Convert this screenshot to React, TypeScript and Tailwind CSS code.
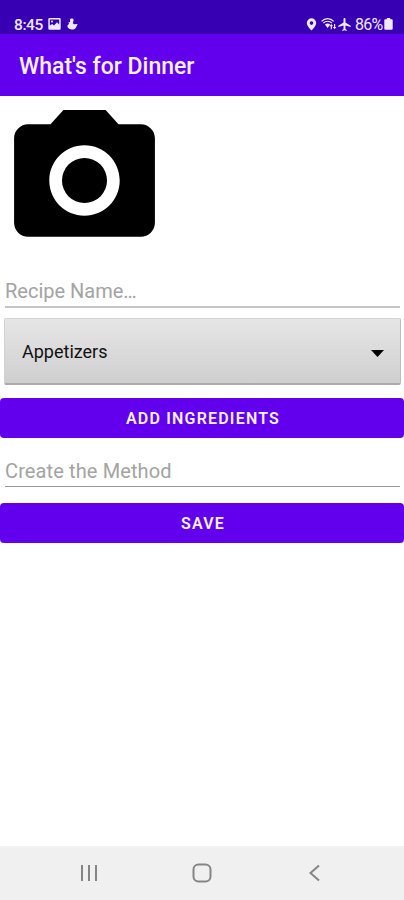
import { useState } from 'react';

const CATEGORIES = ['Appetizers'];

const StatusBar = () => (
	<div className="h-[34px] bg-[#3700b3] text-[#eee9fb] flex items-end justify-between pl-[14px] pr-[11px] pb-[2px]">
		<div className="flex items-center h-[16px]">
			<span className="mt-[2px] w-[29px] text-[15.5px] font-medium leading-[16px] tracking-[-0.4px] whitespace-nowrap">
				8:45
			</span>
			<svg className="ml-[5px]" width="13" height="12" viewBox="0 0 13 12">
				<path
					fill="currentColor"
					fillRule="evenodd"
					d="M1.5 0h10A1.2 1.2 0 0 1 12.700 1.200v9.300a1.200 1.200 0 0 1-1.200 1.200h-10A1.200 1.200 0 0 1 .3 10.500V1.200A1.200 1.200 0 0 1 1.500 0zM1.800 1.500v6L4.200 6l1.900 1.500L9 4.200l2.200 2.300v-5z"
				/>
				<circle cx="4" cy="3.500" r="1" fill="currentColor" />
			</svg>
			<svg className="ml-[6px]" width="11" height="12" viewBox="0 0 11 12">
				<path
					fill="currentColor"
					d="M3.500.8C5.500-.2 7 .9 6.500 2.600L5.900 5.200 7 6.200 10.600 6 9.400 8.700C8.500 10.900 6.800 11.800 4.500 11.500 1.800 11.200.3 9.800.5 8c.1-1 .8-1.700 1.800-2L1.200 4.500l2-.5C2.900 2.700 2.700 1.600 3.500.8z"
				/>
			</svg>
		</div>
		<div className="flex items-center h-[16px]">
			<svg width="11" height="13" viewBox="0 0 10 13">
				<path
					fill="currentColor"
					fillRule="evenodd"
					d="M5 .3a4.700 4.700 0 0 1 4.700 4.700C9.700 8 5 12.500 5 12.500S.3 8 .3 5A4.700 4.700 0 0 1 5 .3zM5 3.300a1.800 1.800 0 1 0 0 3.600 1.800 1.800 0 0 0 0-3.600z"
				/>
			</svg>
			<svg className="ml-[4px]" width="16" height="12" viewBox="0 0 16 12">
				<g fill="none" stroke="currentColor" strokeWidth="1.200">
					<path d="M.6 3.400C3.800-.2 9.400-.2 12.600 3.400" />
					<path d="M2.300 5.200c2.400-2.600 6.200-2.600 8.600 0" />
				</g>
				<path
					fill="currentColor"
					d="M3.900 6.600c1.600-1.500 3.800-1.500 5.400 0L6.600 9.900zM10.300 6l1.800 2.300h-1.200v3H9.700v-3H8.500zM13.600 11.300l-1.800-2.300H13V6h1.200v3h1.200z"
				/>
			</svg>
			<svg className="ml-[1px]" width="13" height="13" viewBox="2 2 19 20">
				<path
					fill="currentColor"
					d="M21 16v-2l-8-5V3.500c0-.83-.67-1.500-1.500-1.500S10 2.670 10 3.500V9l-8 5v2l8-2.500V19l-2 1.500V22l3.500-1 3.500 1v-1.500L13 19v-5.500l8 2.500z"
				/>
			</svg>
			<span className="mt-[2px] ml-[4px] w-[29px] text-[16px] leading-[16px] tracking-[-0.8px] whitespace-nowrap">
				86%
			</span>
			<svg width="9" height="12" viewBox="0 0 9 12">
				<path
					fill="currentColor"
					d="M2.800 0h3.400v1.300h1.500q1 0 1 1v8.400q0 1-1 1H1.300q-1 0-1-1V2.300q0-1 1-1h1.500z"
				/>
			</svg>
		</div>
	</div>
);

interface FieldProps {
	placeholder: string;
	fieldClass: string;
}

const Field = ({ placeholder, fieldClass }: FieldProps) => {
	const [value, setValue] = useState('');

	return (
		<input
			value={value}
			onChange={(e) => setValue(e.target.value)}
			placeholder={placeholder}
			className={`block mx-[5px] w-[395px] h-[34px] outline-none text-[20px] font-normal text-black placeholder:text-[#a3a3a3] ${fieldClass}`}
		/>
	);
};

const ActionButton = ({ label }: { label: string }) => (
	<button className="block w-full h-[40px] rounded-[4px] bg-[#6200ee] text-[#f6f0ff] text-[16px] font-semibold tracking-[1.2px] leading-[40px] pt-px pl-[2px]">
		{label}
	</button>
);

export default function App() {
	return (
		<div className="w-[404px] h-[900px] flex flex-col bg-white font-['Roboto',sans-serif] overflow-hidden">
			<StatusBar />
			<header className="h-[62px] bg-[#6200ee] flex items-center pl-[19px] pt-[4px]">
				<h1 className="text-[23px] font-medium text-[#f6f0ff] leading-[30px] whitespace-nowrap">
					What's for Dinner
				</h1>
			</header>
			<main className="flex-1">
				<svg className="block" width="169" height="169" viewBox="0 0 24 24">
					<circle cx="12" cy="12" r="3.200" />
					<path d="M9 2L7.170 4H4c-1.100 0-2 .9-2 2v12c0 1.100.9 2 2 2h16c1.100 0 2-.9 2-2V6c0-1.100-.9-2-2-2h-3.170L15 2H9zm3 15c-2.760 0-5-2.240-5-5s2.240-5 5-5 5 2.240 5 5-2.240 5-5 5z" />
				</svg>
				<div className="mt-[9px]">
					<Field placeholder="Recipe Name…" fieldClass="pt-[2px] border-b-2 border-[#c4c4c4]" />
				</div>
				<button className="mt-[10px] ml-[4px] w-[397px] h-[67px] flex items-center justify-between pl-[17px] pr-[16px] border border-b-2 border-[#d2d2d2] border-r-[#bcbcbc] border-b-[#ababab] rounded-[2px] bg-linear-to-b from-[#e6e6e6] to-[#cfcfcf]">
					<span className="mt-[2px] text-[18px] font-normal leading-[24px] text-[#111111]">
						{CATEGORIES[0]}
					</span>
					<svg className="mt-[4px]" width="13" height="7" viewBox="0 0 13 7">
						<path d="M0 0h13L6.500 7z" />
					</svg>
				</button>
				<div className="mt-[13px]">
					<ActionButton label="ADD INGREDIENTS" />
				</div>
				<div className="mt-[15px]">
					<Field placeholder="Create the Method" fieldClass="pt-[3px] border-b border-[#999999] tracking-[0.12px]" />
				</div>
				<div className="mt-[16px]">
					<ActionButton label="SAVE" />
				</div>
			</main>
			<nav className="h-[54px] bg-[#f0f0f0] flex items-center justify-between px-[80px] text-[#858585]">
				<svg width="18" height="18" viewBox="0 0 18 18" fill="none" stroke="currentColor" strokeWidth="2">
					<path d="M2 1v16M9 1v16M16 1v16" />
				</svg>
				<svg width="20" height="20" viewBox="0 0 20 20" fill="none" stroke="currentColor" strokeWidth="2">
					<rect x="1.500" y="1.500" width="17" height="17" rx="5" />
				</svg>
				<svg width="18" height="18" viewBox="0 0 18 18" fill="none" stroke="currentColor" strokeWidth="2">
					<path d="M13 1.500L4.500 9l8.500 7.500" />
				</svg>
			</nav>
		</div>
	);
}
